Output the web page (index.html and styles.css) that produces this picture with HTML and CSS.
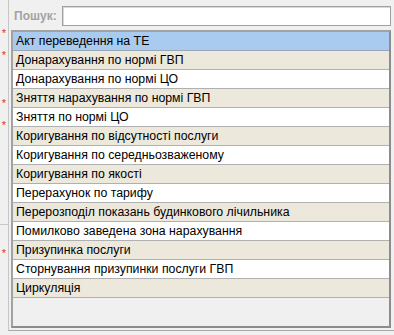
FILE: index.html
```html
<!DOCTYPE html>
<html lang="uk">
<head>
  <meta charset="UTF-8">
  <title>Пошук</title>
  <link rel="stylesheet" href="styles.css">
</head>
<body>
  <div class="screen">
    <div class="gutter">
      <span class="req req-1">*</span>
      <span class="req req-2">*</span>
      <span class="req req-3">*</span>
      <span class="req req-4">*</span>
      <span class="gutter-line"></span>
      <span class="req req-5">*</span>
    </div>

    <div class="frame">
      <div class="search">
        <label for="searchInput">Пошук:</label>
        <input type="text" id="searchInput">
      </div>

      <ul class="list">
        <li class="selected">Акт переведення на ТЕ</li>
        <li>Донарахування по нормі ГВП</li>
        <li>Донарахування по нормі ЦО</li>
        <li>Зняття нарахування по нормі ГВП</li>
        <li>Зняття по нормі ЦО</li>
        <li>Коригування по відсутності послуги</li>
        <li>Коригування по середньозваженому</li>
        <li>Коригування по якості</li>
        <li>Перерахунок по тарифу</li>
        <li>Перерозподіл показань будинкового лічильника</li>
        <li>Помилково заведена зона нарахування</li>
        <li>Призупинка послуги</li>
        <li>Сторнування призупинки послуги ГВП</li>
        <li>Циркуляція</li>
      </ul>
    </div>
  </div>
</body>
</html>
```

FILE: styles.css
```css
body {
  margin: 0;
  background: #f0f0f0;
  font-family: "Liberation Sans", Arial, sans-serif;
  overflow: hidden;
}

.screen {
  display: flex;
  width: 394px;
  height: 335px;
}

/* bits of the form behind the dropdown */
.gutter {
  width: 8px;
  display: flex;
  flex-direction: column;
  align-items: center;
}

.req {
  display: block;
  height: 8px;
  line-height: 12px;
  font-size: 11px;
  color: #e03030;
}

.req-1 { margin-top: 27px; }
.req-2 { margin-top: 14px; }
.req-3 { margin-top: 40px; }
.req-4 { margin-top: 14px; }
.req-5 { margin-top: 22px; }

.gutter-line {
  display: block;
  width: 8px;
  margin-top: 97px;
  height: 1px;
  background: #c8c8c8;
}

.frame {
  flex: 1;
  height: 330px;
  border-left: 1px solid #c6c6c6;
  border-bottom: 1px solid #a8a8a8;
}

.search {
  display: flex;
  align-items: center;
  margin-top: 6px;
  height: 20px;
}

.search label {
  width: 48px;
  margin-left: 5px;
  font-size: 12px;
  font-weight: bold;
  color: #a3a3a3;
}

.search input {
  box-sizing: border-box;
  width: 329px;
  height: 20px;
  margin: 0;
  padding: 0 3px;
  border: 1px solid #a0a0a0;
  box-shadow: inset 1px 1px 0 #d8d8d8;
  background: #fff;
  font: 12px "Liberation Sans", Arial, sans-serif;
}

.list {
  box-sizing: border-box;
  list-style: none;
  width: 380px;
  height: 298px;
  margin: 4px 0 0 2px;
  padding: 0;
  border: 2px solid #a2a2a2;
  border-right-color: #8c8c8c;
  border-bottom-color: #8c8c8c;
  background: #f0f0f0;
}

.list li {
  height: 18px;
  line-height: 18px;
  padding-left: 3px;
  border-bottom: 1px solid #b0b0b0;
  font-size: 12.3px;
  color: #000;
  background: #fff;
  white-space: nowrap;
}

.list li:nth-child(even) {
  background: #ece8dc;
}

.list li.selected {
  background: #a8cbef;
  border-bottom-color: #9aa6b4;
}
```
